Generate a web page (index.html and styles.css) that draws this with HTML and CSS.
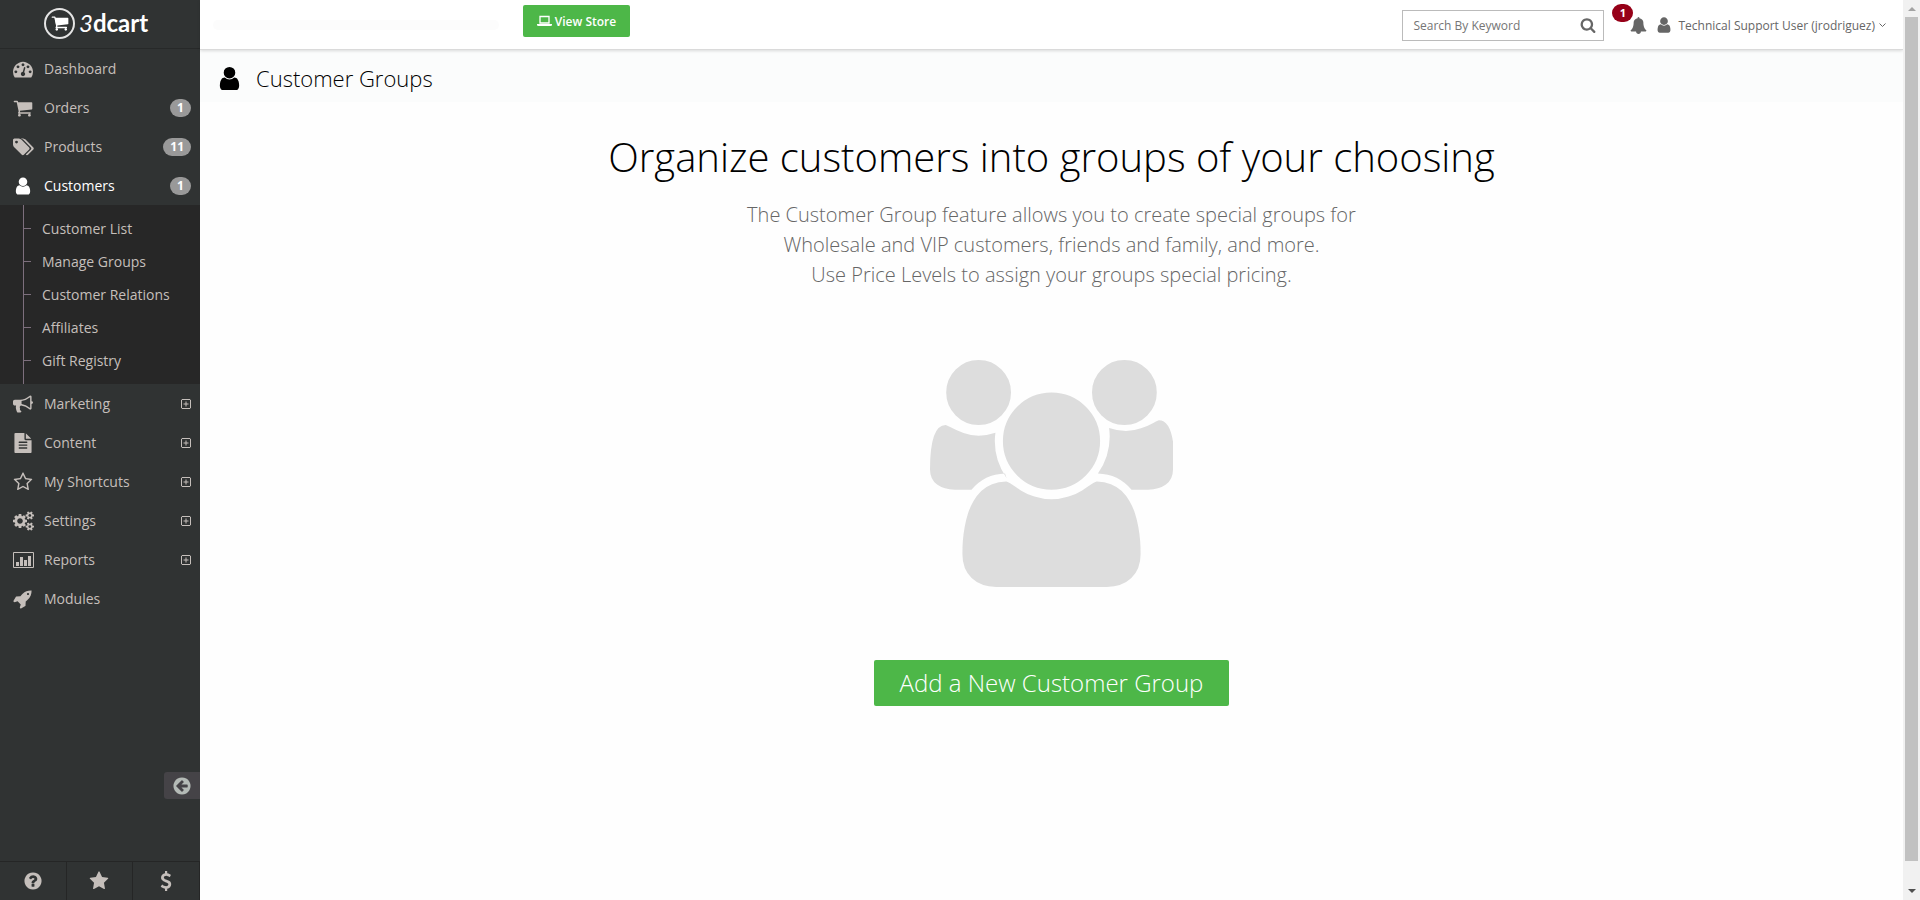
FILE: index.html
```html
<!DOCTYPE html>
<html lang="en">
<head>
<meta charset="utf-8">
<title>Customer Groups</title>
<link rel="stylesheet" href="styles.css">
</head>
<body>
<svg class="sprite" aria-hidden="true">
  <symbol id="user" viewBox="0 0 1792 1792"><path d="M1536 1399q0 109-62.500 187t-150.500 78h-854q-88 0-150.500-78t-62.500-187q0-85 8.500-160.500t31.500-152 58.500-131 94-89 134.500-34.500q131 128 313 128t313-128q76 0 134.500 34.500t94 89 58.500 131 31.500 152 8.500 160.500zm-256-887q0 159-112.500 271.500t-271.500 112.500-271.500-112.500-112.500-271.500 112.500-271.500 271.500-112.500 271.500 112.500 112.500 271.500z"/></symbol>
  <symbol id="cart" viewBox="0 0 1792 1792"><path d="M704 1536q0 52-38 90t-90 38-90-38-38-90 38-90 90-38 90 38 38 90zm896 0q0 52-38 90t-90 38-90-38-38-90 38-90 90-38 90 38 38 90zm128-1088v512q0 24-16.500 42.500t-40.500 21.500l-1044 122q13 60 13 70 0 16-24 64h920q26 0 45 19t19 45-19 45-45 19h-1024q-26 0-45-19t-19-45q0-11 8-31.500t16-36 21.500-40 15.500-29.500l-177-823h-204q-26 0-45-19t-19-45 19-45 45-19h256q16 0 28.500 6.500t19.500 15.500 13 24.500 8 26 5.500 29.500 4.500 26h1201q26 0 45 19t19 45z"/></symbol>
  <symbol id="star" viewBox="0 0 1792 1792"><path d="M1728 647q0 22-26 48l-363 354 86 500q1 7 1 20 0 21-10.500 35.500t-30.500 14.500q-19 0-40-12l-449-236-449 236q-22 12-40 12-21 0-31.500-14.500t-10.500-35.500q0-6 2-20l86-500-364-354q-25-27-25-48 0-37 56-46l502-73 225-455q19-41 49-41t49 41l225 455 502 73q56 9 56 46z"/></symbol>
  <symbol id="plus" viewBox="0 0 10 10"><path d="M1 .5h8l.5.5v8l-.5.5H1L.5 9V1zM2.500 5h5M5 2.500v5" fill="none" stroke="currentColor"/></symbol>
</svg>

<aside class="sidebar">
  <a class="logo" href="#" aria-label="3dcart">
    <span class="logo-mark"><svg viewBox="0 0 1792 1792"><use href="#cart"/><path d="M380 430h1300v480l-1180 140z"/></svg></span>
    <span class="logo-name"><i>3</i>dcart</span>
  </a>
  <nav class="menu">
    <a class="item" href="#"><span class="ico"><svg viewBox="0 0 1792 1792"><path d="M384 1152q0-53-37.500-90.500t-90.500-37.500-90.500 37.500-37.500 90.500 37.500 90.500 90.500 37.500 90.500-37.500 37.500-90.500zm192-448q0-53-37.500-90.500t-90.500-37.500-90.500 37.500-37.500 90.500 37.500 90.500 90.500 37.500 90.500-37.500 37.500-90.500zm428 481l101-382q6-26-7.500-48.500t-38.500-29.500-48 6.500-30 39.500l-101 382q-60 5-107 43.500t-63 98.500q-20 77 20 146t117 89 146-20 89-117q16-60-6-117t-72-91zm660-33q0-53-37.500-90.500t-90.500-37.500-90.500 37.500-37.500 90.500 37.500 90.500 90.500 37.500 90.500-37.500 37.500-90.500zm-640-640q0-53-37.500-90.500t-90.500-37.500-90.500 37.500-37.500 90.500 37.500 90.500 90.500 37.500 90.500-37.500 37.500-90.500zm448 192q0-53-37.500-90.500t-90.500-37.500-90.500 37.500-37.500 90.500 37.500 90.500 90.500 37.500 90.500-37.500 37.500-90.500zm320 448q0 261-141 483-19 29-54 29h-1402q-35 0-54-29-141-221-141-483 0-182 71-348t191-286 286-191 348-71 348 71 286 191 191 286 71 348z"/></svg></span>Dashboard</a>
    <a class="item" href="#"><span class="ico"><svg><use href="#cart"/></svg></span>Orders<span class="count">1</span></a>
    <a class="item" href="#"><span class="ico"><svg class="wide" viewBox="0 0 1920 1792"><path d="M448 448q0-53-37.500-90.500t-90.500-37.500-90.500 37.500-37.500 90.500 37.500 90.500 90.500 37.500 90.500-37.500 37.500-90.500zm1067 576q0 53-37 90l-491 492q-39 37-91 37-53 0-90-37l-715-716q-38-37-64.500-101t-26.500-117v-416q0-52 38-90t90-38h416q53 0 117 26.500t102 64.500l715 714q37 39 37 91zm384 0q0 53-37 90l-491 492q-39 37-91 37-36 0-59-14t-53-45l470-470q37-37 37-90 0-52-37-91l-715-714q-38-38-102-64.500t-117-26.500h224q53 0 117 26.500t102 64.500l715 714q37 39 37 91z"/></svg></span>Products<span class="count">11</span></a>
    <a class="item active" href="#"><span class="ico"><svg><use href="#user"/></svg></span>Customers<span class="count">1</span></a>
    <div class="submenu">
      <a href="#">Customer List</a>
      <a href="#">Manage Groups</a>
      <a href="#">Customer Relations</a>
      <a href="#">Affiliates</a>
      <a href="#">Gift Registry</a>
    </div>
    <a class="item" href="#"><span class="ico"><svg viewBox="0 0 1792 1792"><path d="M1664 640q53 0 90.500 37.500t37.500 90.500-37.500 90.500-90.500 37.500v384q0 52-38 90t-90 38q-417-347-812-380-58 19-91 66t-31 100.500 40 92.500q-20 33-23 65.500t6 58 33.500 55 48 50 61.500 50.500q-29 58-111.500 83t-168.500 11.500-132-55.500q-7-23-29.500-87.500t-32-94.500-23-89-15-101 3.500-98.500 22-110.500h-122q-66 0-113-47t-47-113v-192q0-66 47-113t113-47h480q435 0 896-384 52 0 90 38t38 90v384zm-128 604v-954q-394 302-768 343v270q377 42 768 341z"/></svg></span>Marketing<svg class="plus"><use href="#plus"/></svg></a>
    <a class="item" href="#"><span class="ico"><svg viewBox="0 0 1792 1792"><path d="M1596 476q14 14 28 36h-472v-472q22 14 36 28zm-476 164h544v1056q0 40-28 68t-68 28h-1344q-40 0-68-28t-28-68v-1600q0-40 28-68t68-28h800v544q0 40 28 68t68 28zm160 736v-64q0-14-9-23t-23-9h-704q-14 0-23 9t-9 23v64q0 14 9 23t23 9h704q14 0 23-9t9-23zm0-256v-64q0-14-9-23t-23-9h-704q-14 0-23 9t-9 23v64q0 14 9 23t23 9h704q14 0 23-9t9-23zm0-256v-64q0-14-9-23t-23-9h-704q-14 0-23 9t-9 23v64q0 14 9 23t23 9h704q14 0 23-9t9-23z"/></svg></span>Content<svg class="plus"><use href="#plus"/></svg></a>
    <a class="item" href="#"><span class="ico"><svg viewBox="0 0 1792 1792"><path d="M1201 1004l306-297-422-62-189-382-189 382-422 62 306 297-73 421 378-199 377 199zm527-357q0 22-26 48l-363 354 86 500q1 7 1 20 0 50-41 50-19 0-40-12l-449-236-449 236q-22 12-40 12-21 0-31.500-14.500t-10.500-35.500q0-6 2-20l86-500-364-354q-25-27-25-48 0-37 56-46l502-73 225-455q19-41 49-41t49 41l225 455 502 73q56 9 56 46z"/></svg></span>My Shortcuts<svg class="plus"><use href="#plus"/></svg></a>
    <a class="item" href="#"><span class="ico"><svg class="wide" viewBox="0 0 1920 1792"><path d="M896 896q0-106-75-181t-181-75-181 75-75 181 75 181 181 75 181-75 75-181zm768 512q0-52-38-90t-90-38-90 38-38 90q0 53 37.500 90.500t90.500 37.500 90.500-37.500 37.500-90.500zm0-1024q0-52-38-90t-90-38-90 38-38 90q0 53 37.500 90.500t90.500 37.500 90.500-37.500 37.500-90.500zm-384 421v185q0 10-7 19.500t-16 10.500l-155 24q-11 35-32 76 34 48 90 115 7 11 7 20 0 12-7 19-23 30-82.500 89.500t-78.500 59.500q-11 0-21-7l-115-90q-37 19-77 31-11 108-23 155-7 24-30 24h-186q-11 0-20-7.500t-10-17.500l-23-153q-34-10-75-31l-118 89q-7 7-20 7-11 0-21-8-144-133-144-160 0-9 7-19 10-14 41-53t47-61q-23-44-35-82l-152-24q-10-1-17-9.500t-7-19.500v-185q0-10 7-19.500t16-10.500l155-24q11-35 32-76-34-48-90-115-7-11-7-20 0-12 7-20 22-30 82-89t79-59q11 0 21 7l115 90q34-18 77-32 11-108 23-154 7-24 30-24h186q11 0 20 7.500t10 17.500l23 153q34 10 75 31l118-89q8-7 20-7 11 0 21 8 144 133 144 160 0 8-7 19-12 16-42 54t-45 60q23 48 34 82l152 23q10 2 17 10.500t7 19.500zm640 533v140q0 16-149 31-12 27-30 52 51 113 51 138 0 4-4 7-122 71-124 71-8 0-46-47t-52-68q-20 2-30 2t-30-2q-14 21-52 68t-46 47q-2 0-124-71-4-3-4-7 0-25 51-138-18-25-30-52-149-15-149-31v-140q0-16 149-31 13-29 30-52-51-113-51-138 0-4 4-7 4-2 35-20t59-34 30-16q8 0 46 46.500t52 67.500q20-2 30-2t30 2q51-71 92-112l6-2q4 0 124 70 4 3 4 7 0 25-51 138 17 23 30 52 149 15 149 31zm0-1024v140q0 16-149 31-12 27-30 52 51 113 51 138 0 4-4 7-122 71-124 71-8 0-46-47t-52-68q-20 2-30 2t-30-2q-14 21-52 68t-46 47q-2 0-124-71-4-3-4-7 0-25 51-138-18-25-30-52-149-15-149-31v-140q0-16 149-31 13-29 30-52-51-113-51-138 0-4 4-7 4-2 35-20t59-34 30-16q8 0 46 46.500t52 67.500q20-2 30-2t30 2q51-71 92-112l6-2q4 0 124 70 4 3 4 7 0 25-51 138 17 23 30 52 149 15 149 31z"/></svg></span>Settings<svg class="plus"><use href="#plus"/></svg></a>
    <a class="item" href="#"><span class="ico"><svg class="wide" viewBox="0 0 21 20"><path d="M.5 2.500h20v15H.5z" fill="none" stroke="currentColor"/><path d="M3 12h3v4H3zM7 7h3v9H7zM11 10h3v6h-3zM15 6h3v10h-3z"/></svg></span>Reports<svg class="plus"><use href="#plus"/></svg></a>
    <a class="item" href="#"><span class="ico"><svg viewBox="0 0 1792 1792"><path d="M1440 448q0-40-28-68t-68-28-68 28-28 68 28 68 68 28 68-28 28-68zm224-288q0 249-75.500 430.500t-253.500 360.500q-81 80-195 176l-20 379q-2 16-16 26l-384 224q-7 4-16 4-12 0-23-9l-64-64q-13-14-8-32l85-276-281-281-276 85q-3 1-9 1-14 0-23-9l-64-64q-17-19-5-39l224-384q10-14 26-16l379-20q96-114 176-195 188-187 358-258t431-71q14 0 24 9.500t10 22.500z"/></svg></span>Modules</a>
  </nav>
  <button class="collapse" type="button" aria-label="Collapse menu"><svg viewBox="0 0 1792 1792"><path d="M1408 960v-128q0-26-19-45t-45-19h-502l189-189q19-19 19-45t-19-45l-91-91q-18-18-45-18t-45 18l-362 362-91 91q-18 18-18 45t18 45l91 91 362 362q18 18 45 18t45-18l91-91q18-18 18-45t-18-45l-189-189h502q26 0 45-19t19-45zm256-64q0 209-103 385.500t-279.500 279.500-385.500 103-385.500-103-279.500-279.500-103-385.500 103-385.500 279.500-279.500 385.500-103 385.500 103 279.500 279.500 103 385.500z"/></svg></button>
  <div class="quick">
    <a href="#" aria-label="Help"><svg viewBox="0 0 1792 1792"><path d="M1024 1376v-192q0-14-9-23t-23-9h-192q-14 0-23 9t-9 23v192q0 14 9 23t23 9h192q14 0 23-9t9-23zm256-672q0-88-55.500-163t-138.500-116-170-41q-243 0-371 213-15 24 8 42l132 100q7 6 19 6 16 0 25-12 53-68 86-92 34-24 86-24 48 0 85.500 26t37.500 59q0 38-20 61t-68 45q-63 28-115.500 86.500t-52.500 125.500v36q0 14 9 23t23 9h192q14 0 23-9t9-23q0-19 21.500-49.500t54.500-49.500q32-18 49-28.500t46-35 44.500-48 28-60.500 12.500-81zm384 192q0 209-103 385.500t-279.500 279.500-385.500 103-385.500-103-279.500-279.500-103-385.500 103-385.500 279.500-279.500 385.500-103 385.500 103 279.500 279.500 103 385.500z"/></svg></a>
    <a href="#" aria-label="Favorites"><svg><use href="#star"/></svg></a>
    <a href="#" aria-label="Billing"><svg viewBox="0 0 1792 1792"><path d="M1362 1185q0 153-99.500 263.500t-258.500 136.500v175q0 14-9 23t-23 9h-135q-13 0-22.500-9.500t-9.500-22.500v-175q-66-9-127.500-31t-101.500-44.500-74-48-46.500-37.500-17.500-18q-17-21-2-41l103-135q7-10 23-12 15-2 24 9l2 2q113 99 243 125 37 8 74 8 81 0 142.500-43t61.500-122q0-28-15-53t-33.500-42-58.500-37.500-66-32-80-32.500q-39-16-61.500-25t-61.500-26.500-62.500-31-56.500-35.500-53.500-42.500-43.500-49-35.500-58-21-66.500-8.500-78q0-138 98-242t255-134v-180q0-13 9.500-22.500t22.500-9.500h135q14 0 23 9t9 23v176q57 6 110.500 23t87 33.500 63.500 37.500 39 29 15 14q17 18 5 38l-81 146q-8 15-23 16-14 3-27-7-3-3-14.500-12t-39-26.500-58.500-32-74.500-26-85.500-11.500q-95 0-155 43t-60 111q0 26 8.500 48t29.500 41.500 39.500 33 56 31 60.500 27 70 27.500q53 20 81 31.500t76 35 75.500 42.500 62 50 53 63.500 31.500 76.500 13 94z"/></svg></a>
  </div>
</aside>

<main class="main">
  <header class="topbar">
    <span class="store-url"></span>
    <a class="view-store" href="#"><svg viewBox="0 0 15 12"><path d="M3 1.500h9V8H3z" fill="none" stroke="currentColor" stroke-width="1.300"/><path d="M0 9h15v1q0 1-1.500 1h-12Q0 11 0 10z"/></svg>View Store</a>
    <form class="search">
      <input type="text" placeholder="Search By Keyword" aria-label="Search By Keyword">
      <button type="button" aria-label="Search"><svg viewBox="0 0 1792 1792"><path d="M1216 832q0-185-131.500-316.500t-316.500-131.500-316.500 131.500-131.500 316.500 131.500 316.500 316.500 131.500 316.500-131.500 131.500-316.500zm512 832q0 52-38 90t-90 38q-54 0-90-38l-343-342q-179 124-399 124-143 0-273.500-55.500t-225-150-150-225-55.500-273.500 55.500-273.500 150-225 225-150 273.500-55.500 273.500 55.500 225 150 150 225 55.500 273.500q0 220-124 399l343 343q37 37 37 90z"/></svg></button>
    </form>
    <a class="alerts" href="#" aria-label="Notifications"><svg viewBox="0 0 1792 1792"><path d="M1728 1408q0 52-38 90t-90 38h-448q0 106-75 181t-181 75-181-75-75-181h-448q-52 0-90-38t-38-90q50-42 91-88t85-119.500 74.500-158.500 50-206 19.500-260q0-152 117-282.500t307-158.500q-8-19-8-39 0-40 28-68t68-28 68 28 28 68q0 20-8 39 190 28 307 158.500t117 282.500q0 139 19.500 260t50 206 74.500 158.500 85 119.500 91 88z"/></svg><span class="alert-count">1</span></a>
    <button class="account" type="button"><svg class="face"><use href="#user"/></svg><span>Technical Support User (jrodriguez)</span><svg class="caret" viewBox="0 0 7 5"><path d="M.5.5l3 3 3-3" fill="none" stroke="currentColor"/></svg></button>
  </header>
  <div class="page-title"><svg><use href="#user"/></svg><h1>Customer Groups</h1></div>
  <section class="intro">
    <h2>Organize customers into groups of your choosing</h2>
    <p>The Customer Group feature allows you to create special groups for<br>Wholesale and VIP customers, friends and family, and more.<br>Use Price Levels to assign your groups special pricing.</p>
    <svg class="people" viewBox="0 0 1920 1792"><path d="M593 896q-162 5-265 128h-134q-82 0-138-40.500t-56-118.500q0-353 124-353 6 0 43.500 21t97.500 42.500 119 21.500q67 0 133-23-5 37-5 66 0 159 93 293zm1071 637q0 120-73 189.500t-194 69.500h-874q-121 0-194-69.500t-73-189.500q0-53 3.500-103.500t14-109 26.500-108.500 43-97.500 62-81 85.500-53.500 111.500-20q10 0 43 21.500t73 48 107 48 135 21.500 135-21.500 107-48 73-48 43-21.500q61 0 111.500 20t85.500 53.500 62 81 43 97.500 26.500 108.500 14 109 3.500 103.500zm-1024-1277q0 106-75 181t-181 75-181-75-75-181 75-181 181-75 181 75 75 181zm704 384q0 159-112.500 271.500t-271.500 112.500-271.500-112.500-112.500-271.500 112.500-271.500 271.500-112.500 271.500 112.500 112.500 271.500zm576 225q0 78-56 118.500t-138 40.500h-134q-103-123-265-128 93-134 93-293 0-29-5-66 66 23 133 23 59 0 119-21.500t97.500-42.500 43.500-21q124 0 124 353zm-128-609q0 106-75 181t-181 75-181-75-75-181 75-181 181-75 181 75 75 181z"/></svg>
    <button class="add" type="button">Add a New Customer Group</button>
  </section>
</main>

<div class="scrollbar" aria-hidden="true">
  <svg class="up" viewBox="0 0 8 4"><path d="M0 4l4-4 4 4z"/></svg>
  <div class="thumb"></div>
  <svg class="down" viewBox="0 0 8 4"><path d="M0 0l4 4 4-4z"/></svg>
</div>
</body>
</html>
```
FILE: styles.css
```css
* { box-sizing: border-box; }
body {
  margin: 0;
  display: flex;
  min-height: 100vh;
  background: #fefefe;
  font-family: "Open Sans", "Liberation Sans", sans-serif;
  color: #666;
}
svg { fill: currentColor; display: block; flex: none; }
a { color: inherit; text-decoration: none; }
button { font: inherit; color: inherit; border: 0; background: none; padding: 0; cursor: pointer; }
.sprite { position: absolute; width: 0; height: 0; }

.sidebar {
  flex: none;
  width: 200px;
  height: 100vh;
  position: sticky;
  top: 0;
  display: flex;
  flex-direction: column;
  background: #303333;
  color: #c5bfbb;
}
.logo {
  display: flex;
  align-items: center;
  gap: 4px;
  height: 49px;
  padding: 0 0 2px 44px;
  border-bottom: 1px solid #272929;
  color: #fff;
}
.logo-mark {
  display: grid;
  place-items: center;
  width: 31px;
  height: 31px;
  border: 2px solid #e4e4e4;
  border-radius: 50%;
}
.logo-mark svg { width: 18px; height: 18px; }
.logo-name { font: 700 24px/30px Lato, sans-serif; }
.logo-name i { font-weight: 400; }

.item {
  display: flex;
  align-items: center;
  height: 39px;
  padding: 0 9px 0 10px;
  font-size: 14px;
}
.item.active { color: #fff; }
.ico { display: grid; place-items: center; width: 26px; margin-right: 8px; }
.ico svg { width: 20px; height: 20px; }
.ico .wide { width: 21px; }
.count {
  margin-left: auto;
  min-width: 21px;
  padding: 0 7px;
  border-radius: 9px;
  background: #999;
  color: #fff;
  font-size: 12px;
  font-weight: 700;
  line-height: 18px;
  text-align: center;
}
.plus { width: 10px; height: 10px; margin-left: auto; }
.submenu {
  display: flex;
  flex-direction: column;
  padding: 7px 0 7px 23px;
  background: linear-gradient(90deg, transparent 23px, #7d6f7d 23px, #7d6f7d 24px, transparent 24px) #272727;
}
.submenu a {
  display: flex;
  align-items: center;
  gap: 11px;
  height: 33px;
  font-size: 14px;
}
.submenu a::before { content: ""; width: 8px; height: 1px; background: #7d6f7d; }
.collapse {
  display: grid;
  place-items: center;
  align-self: flex-end;
  width: 36px;
  height: 27px;
  margin: auto 0 62px;
  border-radius: 3px 0 0 3px;
  background: #454347;
  color: #b4bab6;
}
.collapse svg { width: 20px; height: 20px; }
.quick {
  display: grid;
  grid-template-columns: repeat(3, 1fr);
  height: 39px;
  border-top: 1px solid #252626;
}
.quick a { display: grid; place-items: center; border-right: 1px solid #252626; }
.quick svg { width: 20px; height: 20px; }

.main { flex: 1; min-width: 0; }
.topbar {
  position: relative;
  display: flex;
  align-items: center;
  height: 50px;
  padding: 1px 17px 0 13px;
  background: #fff;
  border-bottom: 1px solid #dadada;
  box-shadow: 0 1px 3px #0002;
  font-size: 12px;
}
.store-url { width: 286px; height: 10px; margin-right: 24px; border-radius: 5px; background: #fcfcfc; }
.view-store {
  display: flex;
  align-items: center;
  justify-content: center;
  gap: 3px;
  align-self: flex-start;
  width: 107px;
  height: 32px;
  margin-top: 4px;
  border-radius: 2px;
  background: #4db748;
  color: #fff;
  font-weight: 600;
}
.view-store svg { width: 15px; height: 12px; }
.search {
  display: flex;
  align-items: center;
  width: 202px;
  height: 31px;
  margin-left: auto;
  padding: 0 7px 0 10px;
  border: 1px solid #bbb;
}
.search input {
  flex: 1;
  min-width: 0;
  padding: 0;
  border: 0;
  outline: 0;
  background: none;
  font: inherit;
}
.search input::placeholder { color: #757575; opacity: 1; }
.search svg { width: 16px; height: 16px; }
.alerts { position: relative; margin-left: 26px; }
.alerts svg { width: 17px; height: 17px; }
.alert-count {
  position: absolute;
  right: 14px;
  bottom: 12px;
  width: 21px;
  border-radius: 9px;
  background: #960018;
  color: #fff;
  font-size: 11px;
  font-weight: 700;
  line-height: 18px;
  text-align: center;
}
.account { display: flex; align-items: center; margin-left: 8px; }
.face { width: 18px; height: 18px; margin-right: 5px; }
.caret { width: 7px; height: 5px; margin-left: 4px; }

.page-title {
  display: flex;
  align-items: center;
  gap: 13px;
  height: 52px;
  padding: 4px 16px 0 16px;
  background: #fbfcfc;
  color: #000;
}
.page-title svg { width: 27px; height: 27px; }
h1 { margin: 0; font-size: 22px; font-weight: 300; }

.intro {
  display: flex;
  flex-direction: column;
  align-items: center;
  padding: 25px 20px 40px;
  text-align: center;
}
h2 { margin: 0; color: #000; font-size: 40px; font-weight: 300; line-height: 60px; }
.intro p { margin: 13px 0 0; font-size: 20px; font-weight: 300; line-height: 30px; }
.people { width: 243px; height: 227px; margin: 70px 0 73px; color: #ddd; }
.add {
  height: 46px;
  padding: 0 26px 2px;
  border-radius: 2px;
  background: #4db748;
  color: #fff;
  font-size: 24px;
  font-weight: 300;
}

.scrollbar {
  flex: none;
  position: sticky;
  top: 0;
  display: flex;
  flex-direction: column;
  align-items: center;
  width: 17px;
  height: 100vh;
  padding: 7px 0;
  background: #f1f1f1;
}
.scrollbar svg { width: 8px; height: 4px; }
.up { color: #a3a3a3; }
.down { color: #505050; }
.thumb { flex: 1; width: 13px; margin: 6px 0 28px; background: #c1c1c1; }
```
